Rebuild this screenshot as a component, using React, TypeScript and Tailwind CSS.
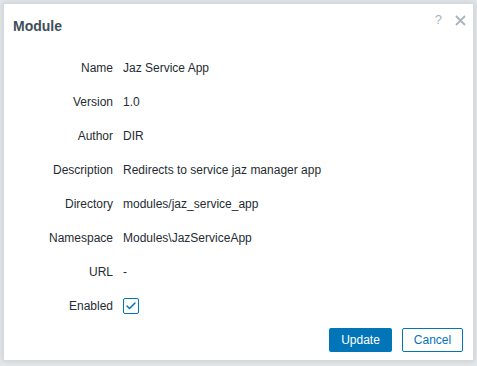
import { Check } from "lucide-react";

const rows: [string, string][] = [
  ["Name", "Jaz Service App"],
  ["Version", "1.0"],
  ["Author", "DIR"],
  ["Description", "Redirects to service jaz manager app"],
  ["Directory", "modules/jaz_service_app"],
  ["Namespace", "Modules\\JazServiceApp"],
  ["URL", "-"],
];

export default function App() {
  return (
    <div className="w-[477px] h-[366px] overflow-hidden bg-[#e3e7e9] pt-[3px] pl-[3px] font-['Liberation_Sans',Arial,sans-serif] text-[#1f2c33]">
      <div className="relative flex h-[358px] w-[471px] flex-col border border-[#d3dadd] bg-white shadow-[0_0_6px_rgba(0,0,0,0.12)]">
        <div className="h-[47px] pl-[9px] pt-[13px]">
          <h2 className="text-[14px] font-bold leading-[18px] text-[#3e4e5a]">Module</h2>
        </div>
        <div className="absolute right-[7px] top-[9px] flex items-center gap-[13px] text-[#a9b4ba]">
          <span className="text-[13px] leading-[14px]">?</span>
          <svg width="11" height="11" viewBox="0 0 11 11">
            <path d="M1 1 L10 10 M10 1 L1 10" stroke="currentColor" strokeWidth="1.8" />
          </svg>
        </div>

        <div className="grid grid-cols-[109px_1fr] gap-x-[10px] text-[12px]">
          {rows.map(([label, value]) => (
            <div key={label} className="contents">
              <div className="flex h-[34px] items-center justify-end">{label}</div>
              <div className="flex h-[34px] items-center">{value}</div>
            </div>
          ))}
          <div className="flex h-[34px] items-center justify-end">Enabled</div>
          <div className="flex h-[34px] items-center">
            <span className="flex h-[16px] w-[16px] items-center justify-center rounded-[2px] border border-[#0275b8]">
              <Check className="h-[12px] w-[12px] text-[#0275b8]" strokeWidth={3} />
            </span>
          </div>
        </div>

        <div className="mt-auto flex justify-end gap-[10px] pb-[8px] pr-[10px]">
          <button className="h-[24px] w-[63px] rounded-[2px] bg-[#0275b8] text-[12px] text-white">Update</button>
          <button className="h-[24px] w-[61px] rounded-[2px] border border-[#0275b8] bg-white text-[12px] text-[#0275b8]">
            Cancel
          </button>
        </div>
      </div>
    </div>
  );
}
